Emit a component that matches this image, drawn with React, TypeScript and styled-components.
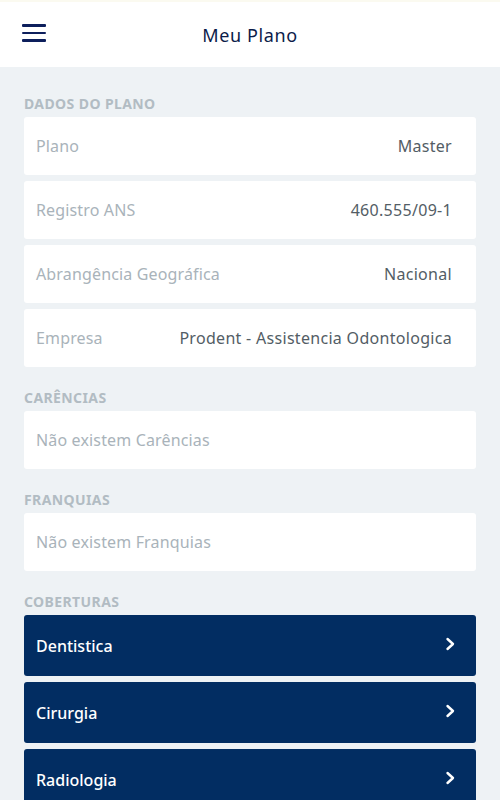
import React from "react";
import styled, { createGlobalStyle } from "styled-components";

const GlobalStyle = createGlobalStyle`
  html, body {
    margin: 0;
    padding: 0;
    background: #eef2f5;
    font-family: "Noto Sans", Lato, sans-serif;
  }
`;

type Row = { label: string; value: string };

const planRows: Row[] = [
  { label: "Plano", value: "Master" },
  { label: "Registro ANS", value: "460.555/09-1" },
  { label: "Abrangência Geográfica", value: "Nacional" },
  { label: "Empresa", value: "Prodent - Assistencia Odontologica" },
];

const coverages = ["Dentistica", "Cirurgia", "Radiologia"];

const App = () => {
  return (
    <Page>
      <GlobalStyle />
      <Header>
        <MenuButton aria-label="menu">
          <span />
          <span />
          <span />
        </MenuButton>
        <Title>Meu Plano</Title>
      </Header>
      <Content>
        <Section>
          <SectionTitle>DADOS DO PLANO</SectionTitle>
          {planRows.map((row) => (
            <Card key={row.label}>
              <Label>{row.label}</Label>
              <Value>{row.value}</Value>
            </Card>
          ))}
        </Section>
        <Section>
          <SectionTitle>CARÊNCIAS</SectionTitle>
          <Card>
            <Label>Não existem Carências</Label>
          </Card>
        </Section>
        <Section>
          <SectionTitle>FRANQUIAS</SectionTitle>
          <Card>
            <Label>Não existem Franquias</Label>
          </Card>
        </Section>
        <Section>
          <SectionTitle>COBERTURAS</SectionTitle>
          {coverages.map((c) => (
            <CoverageItem key={c}>
              <span>{c}</span>
              <svg width="12" height="14" viewBox="0 0 12 14">
                <path
                  d="M3.5 2 L9 7 L3.5 12"
                  fill="none"
                  stroke="#fff"
                  strokeWidth="2.4"
                  strokeLinecap="round"
                  strokeLinejoin="round"
                />
              </svg>
            </CoverageItem>
          ))}
        </Section>
      </Content>
    </Page>
  );
};

export default App;

const Page = styled.div`
  min-height: 800px;
  background: #eef2f5;
`;

const Header = styled.header`
  position: relative;
  height: 67px;
  background: #fff;
  border-top: 2px solid #fbfaf0;
  box-sizing: border-box;
  display: flex;
  align-items: center;
  justify-content: center;
`;

const MenuButton = styled.div`
  position: absolute;
  left: 22px;
  top: 22px;
  width: 24px;
  display: flex;
  flex-direction: column;
  gap: 5px;
  span {
    display: block;
    height: 2.5px;
    background: #0d1f5c;
    border-radius: 1px;
  }
`;

const Title = styled.h1`
  margin: 0;
  font-size: 18px;
  font-weight: 400;
  letter-spacing: 0.6px;
  color: #0b1c4a;
`;

const Content = styled.main`
  padding: 30px 24px 0;
  display: flex;
  flex-direction: column;
  gap: 24px;
`;

const Section = styled.section`
  display: flex;
  flex-direction: column;
  gap: 6px;
`;

const SectionTitle = styled.h2`
  margin: 0;
  font-size: 14px;
  line-height: 14px;
  font-weight: 700;
  letter-spacing: 0.4px;
  color: #b2bcc3;
`;

const Card = styled.div`
  height: 58px;
  background: #fff;
  border-radius: 3px;
  padding: 0 24px 0 12px;
  display: flex;
  align-items: center;
  justify-content: space-between;
  box-sizing: border-box;
`;

const Label = styled.span`
  font-size: 16px;
  letter-spacing: 0.15px;
  color: #a9b3ba;
`;

const Value = styled.span`
  font-size: 16px;
  letter-spacing: 0.3px;
  color: #535d65;
`;

const CoverageItem = styled.div`
  height: 61px;
  background: #022d62;
  border-radius: 3px;
  padding: 0 20px 0 12px;
  display: flex;
  align-items: center;
  justify-content: space-between;
  box-sizing: border-box;
  color: #fff;
  font-size: 16px;
  font-weight: 500;
  svg {
    margin-top: -4px;
  }
`;
